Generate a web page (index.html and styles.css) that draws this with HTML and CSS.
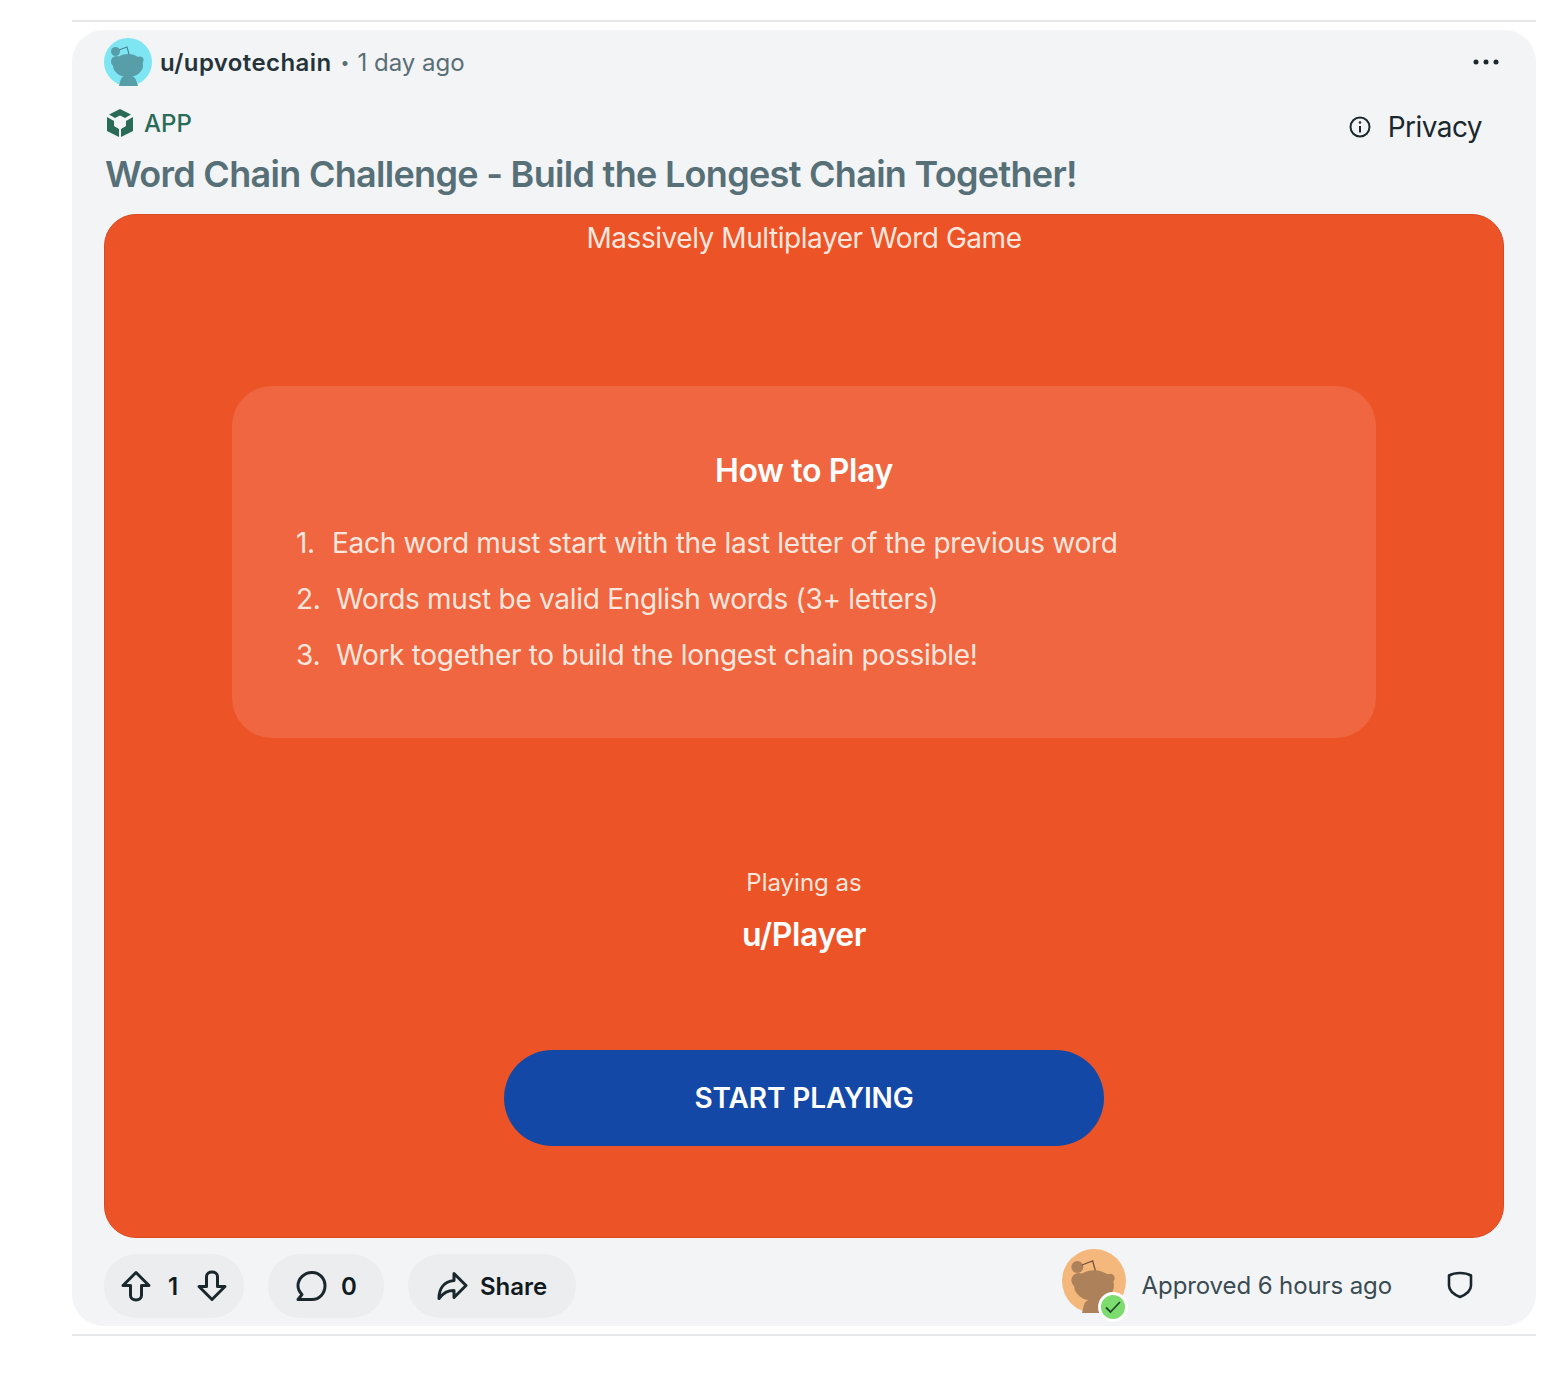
FILE: index.html
```html
<!DOCTYPE html>
<html lang="en">
<head>
	<title>Word Chain Challenge</title>
	<meta charset="UTF-8">
	<link rel="stylesheet" href="styles.css">
</head>
<body>
	<div class="feed">
		<hr class="divider">
		<article class="post">
			<div class="postHead">
				<svg class="avatar" viewBox="0 0 48 48">
					<circle cx="24" cy="24" r="24" fill="#7ee6f3"/>
					<g fill="#579ea9">
						<circle cx="11.500" cy="13.500" r="4.500"/>
						<path d="M15 12l8-3 2.500 9" fill="none" stroke="#4b8792" stroke-width="1.200"/>
						<ellipse cx="24" cy="27.500" rx="15" ry="11.500"/>
						<circle cx="12.500" cy="23.500" r="5.500"/>
						<circle cx="36" cy="22" r="3.500"/>
						<path d="M15 48l1.500-6c.8-3 3.500-4.500 7.500-4.500s7 1.500 8 4.500l2 6z"/>
					</g>
				</svg>
				<span class="author">u/upvotechain</span>
				<span class="dot">•</span>
				<span class="time">1 day ago</span>
				<svg class="more" viewBox="0 0 26 6" fill="#1a282d">
					<circle cx="3" cy="3" r="2.500"/>
					<circle cx="13" cy="3" r="2.500"/>
					<circle cx="23" cy="3" r="2.500"/>
				</svg>
			</div>
			<div class="tagRow">
				<div class="appTag">
					<svg class="appIcon" viewBox="0 0 28 30" fill="#2a6b57">
						<path d="M14 1l11 5.500-6 3.500-5-2.500-5 2.500-6-3.500z"/>
						<path d="M1 9l7 4v5l5 3v8l-12-6z"/>
						<path d="M27 9l-7 4v5l-5 3v8l12-6z"/>
					</svg>
					<span>APP</span>
				</div>
				<div class="privacy">
					<svg class="infoIcon" viewBox="0 0 22 22" fill="none" stroke="#1a282d" stroke-width="2">
						<circle cx="11" cy="11" r="9.500"/>
						<path d="M11 10v6.500"/>
						<circle cx="11" cy="6.500" r=".6" stroke-width="1.400"/>
					</svg>
					<span>Privacy</span>
				</div>
			</div>
			<h2 class="postTitle">Word Chain Challenge - Build the Longest Chain Together!</h2>
			<div class="game">
				<div class="gameName">Massively Multiplayer Word Game</div>
				<div class="howTo">
					<h3>How to Play</h3>
					<ol>
						<li><span class="num">1.</span>Each word must start with the last letter of the previous word</li>
						<li><span class="num wide">2.</span>Words must be valid English words (3+ letters)</li>
						<li><span class="num wide">3.</span>Work together to build the longest chain possible!</li>
					</ol>
				</div>
				<div class="playingAs">Playing as</div>
				<div class="playerName">u/Player</div>
				<button class="startBtn">START PLAYING</button>
			</div>
			<div class="postFoot">
				<div class="pill votes">
					<svg class="icon" viewBox="0 0 32 32" fill="none" stroke="#1a282d" stroke-width="3" stroke-linejoin="round">
						<path d="M16 2.500l13 13h-7.500v10c0 6-11 6-11 0v-10h-7.500z"/>
					</svg>
					<span>1</span>
					<svg class="icon down" viewBox="0 0 32 32" fill="none" stroke="#1a282d" stroke-width="3" stroke-linejoin="round">
						<path d="M16 29.500l-13-13h7.500v-10c0-6 11-6 11 0v10h7.500z"/>
					</svg>
				</div>
				<div class="pill comments">
					<svg class="icon" viewBox="0 0 32 32" fill="none" stroke="#1a282d" stroke-width="3" stroke-linejoin="round">
						<path d="M17 2.500c7.500 0 13 5.800 13 13.300s-5.500 13.700-13 13.700h-14l4-5c-2.500-2.500-4-5.500-4-8.700 0-7.500 6.500-13.300 14-13.300z"/>
					</svg>
					<span>0</span>
				</div>
				<div class="pill share">
					<svg class="icon" viewBox="0 0 32 32" fill="none" stroke="#1a282d" stroke-width="3" stroke-linejoin="round">
						<path d="M18 3.500l12 12-12 12v-7c-6 0-10 1.500-15 8 0-10 5-17 15-18z"/>
					</svg>
					<span>Share</span>
				</div>
				<div class="approved">
					<div class="modAvatar">
						<svg class="avatarBig" viewBox="0 0 48 48">
							<circle cx="24" cy="24" r="24" fill="#f5b87c"/>
							<g fill="#ad825a">
								<circle cx="11.500" cy="13.500" r="4.500"/>
								<path d="M15 12l8-3 2.500 9" fill="none" stroke="#76573d" stroke-width="1"/>
								<ellipse cx="24" cy="27.500" rx="15" ry="11.500"/>
								<circle cx="12.500" cy="23.500" r="5.500"/>
								<circle cx="36" cy="22" r="3.500"/>
								<path d="M15 48l1.500-6c.8-3 3.500-4.500 7.500-4.500s7 1.500 8 4.500l2 6z"/>
							</g>
						</svg>
						<div class="okBadge">
							<svg viewBox="0 0 18 18" fill="none" stroke="#1f4a2c" stroke-width="1.800">
								<path d="M2 9.500l4.500 4.500 9.500-10"/>
							</svg>
						</div>
					</div>
					<span class="approvedText">Approved 6 hours ago</span>
					<svg class="shield" viewBox="0 0 26 28" fill="none" stroke="#1a282d" stroke-width="2.600" stroke-linejoin="round">
						<path d="M13 2c4 0 8 .8 11 2.500v10c0 5-5 9-11 11.500-6-2.500-11-6.500-11-11.500v-10c3-1.700 7-2.500 11-2.500z"/>
					</svg>
				</div>
			</div>
		</article>
		<hr class="divider">
	</div>
</body>
</html>
```
FILE: styles.css
```css
body {
	margin: 0;
	background-color: white;
	font-family: "Inter", "Liberation Sans", sans-serif;
}
.feed {
	width: 1464px;
	margin-left: 72px;
	padding-top: 20px;
}
.divider {
	margin: 0;
	height: 2px;
	border: none;
	background-color: #e6e7e8;
}
.post {
	margin: 8px 0;
	height: 1296px;
	box-sizing: border-box;
	padding: 8px 32px 0 32px;
	background-color: #f2f4f6;
	border-radius: 32px;
}

.postHead {
	display: flex;
	align-items: center;
	height: 48px;
}
.avatar {
	width: 48px;
	height: 48px;
	margin-right: 8px;
}
.author {
	font-size: 24px;
	font-weight: 600;
	letter-spacing: 0.4px;
	color: #25333a;
}
.dot {
	margin: 0 8px 0 9px;
	font-size: 16px;
	color: #5a6e75;
}
.time {
	font-size: 24px;
	color: #5a6e75;
}
.more {
	width: 26px;
	height: 6px;
	margin-left: auto;
	margin-right: 5px;
	margin-top: -1px;
}

.tagRow {
	display: flex;
	justify-content: space-between;
	height: 51px;
	margin-top: 15px;
}
.appTag {
	display: flex;
	align-items: center;
	gap: 10px;
	height: 44px;
	padding-left: 2px;
	color: #2a6b57;
	font-size: 24px;
	font-weight: 500;
}
.appIcon {
	width: 28px;
	height: 30px;
}
.privacy {
	display: flex;
	align-items: center;
	gap: 17px;
	height: 52px;
	padding-right: 22px;
	color: #1a282d;
	font-size: 28px;
	letter-spacing: -0.55px;
}
.infoIcon {
	width: 22px;
	height: 22px;
}
.postTitle {
	margin: 0;
	padding-left: 1px;
	font-size: 36px;
	line-height: 44px;
	font-weight: 600;
	letter-spacing: -0.7px;
	color: #576f76;
}

.game {
	display: flex;
	flex-direction: column;
	align-items: center;
	box-sizing: border-box;
	height: 1024px;
	margin-top: 18px;
	border: 1px solid #d94a20;
	border-radius: 32px;
	background-color: #ec5326;
	color: white;
}
.gameName {
	margin-top: 6px;
	font-size: 28px;
	line-height: 34px;
	letter-spacing: -0.45px;
	color: #fde6de;
}
.howTo {
	box-sizing: border-box;
	width: 1144px;
	height: 352px;
	margin-top: 131px;
	padding: 64px;
	background-color: #ef6640;
	border-radius: 40px;
}
.howTo h3 {
	margin: 0 0 23px 0;
	font-size: 32px;
	line-height: 42px;
	font-weight: 600;
	letter-spacing: -0.35px;
	text-align: center;
}
.howTo ol {
	margin: 0;
	padding: 0;
	list-style: none;
}
.howTo li {
	height: 56px;
	font-size: 28px;
	line-height: 56px;
	letter-spacing: -0.29px;
	color: #fde6de;
}
.num {
	display: inline-block;
	width: 36px;
}
.wide {
	width: 40px;
}
.playingAs {
	margin-top: 128px;
	font-size: 24px;
	line-height: 34px;
	color: #fde6de;
}
.playerName {
	margin-top: 14px;
	font-size: 32px;
	line-height: 42px;
	font-weight: 600;
	letter-spacing: -0.4px;
}
.startBtn {
	width: 600px;
	height: 96px;
	margin-top: 94px;
	border: none;
	border-radius: 48px;
	background-color: #1448a6;
	color: white;
	font-family: inherit;
	font-size: 28px;
	font-weight: 600;
	letter-spacing: -0.1px;
}

.postFoot {
	display: flex;
	align-items: center;
	gap: 24px;
	height: 64px;
	margin-top: 16px;
}
.pill {
	display: flex;
	align-items: center;
	height: 64px;
	box-sizing: border-box;
	border-radius: 32px;
	background-color: #ebedef;
	color: #111a1e;
	font-size: 24px;
	font-weight: 600;
}
.icon {
	width: 32px;
	height: 32px;
}
.votes {
	width: 140px;
	padding-left: 16px;
	gap: 16px;
}
.down {
	margin-left: 2px;
}
.comments {
	width: 116px;
	padding-left: 27px;
	gap: 14px;
}
.share {
	width: 168px;
	padding-left: 28px;
	gap: 12px;
}
.approved {
	display: flex;
	align-items: center;
	align-self: stretch;
	margin-left: auto;
	margin-right: 31px;
}
.modAvatar {
	position: relative;
	width: 64px;
	height: 64px;
	margin-top: -10px;
	margin-right: 16px;
}
.avatarBig {
	width: 64px;
	height: 64px;
}
.okBadge {
	position: absolute;
	right: -2px;
	bottom: -9px;
	width: 18px;
	height: 18px;
	padding: 3px;
	border-radius: 50%;
	background-color: #7cdc6e;
	border: 3px solid white;
}
.approvedText {
	margin-top: -2px;
	font-size: 24px;
	letter-spacing: -0.1px;
	color: #3a4b52;
}
.shield {
	width: 26px;
	height: 28px;
	margin-top: -2px;
	margin-left: 55px;
}
```
